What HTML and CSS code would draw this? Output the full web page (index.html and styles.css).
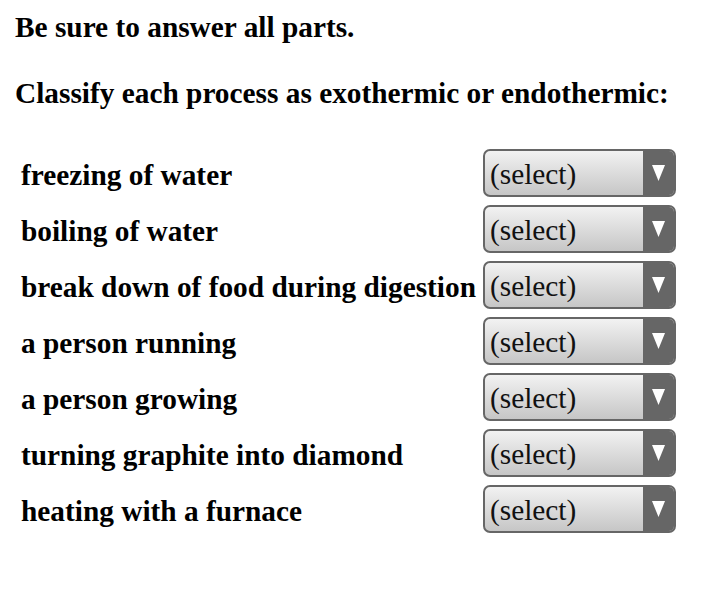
FILE: index.html
```html
<!DOCTYPE html>
<html>
<head>
<meta charset="utf-8">
<link rel="stylesheet" href="styles.css">
</head>
<body>
<div class="page">
  <p class="note">Be sure to answer all parts.</p>
  <p class="prompt">Classify each process as exothermic or endothermic:</p>
  <div class="rows">
    <div class="label">freezing of water</div>
    <div class="sel"><span class="val">(select)</span><span class="arrow"><svg width="13" height="16" viewBox="0 0 13 16"><polygon points="0,0 13,0 6.5,16" fill="#fff"/></svg></span></div>
    <div class="label">boiling of water</div>
    <div class="sel"><span class="val">(select)</span><span class="arrow"><svg width="13" height="16" viewBox="0 0 13 16"><polygon points="0,0 13,0 6.5,16" fill="#fff"/></svg></span></div>
    <div class="label">break down of food during digestion</div>
    <div class="sel"><span class="val">(select)</span><span class="arrow"><svg width="13" height="16" viewBox="0 0 13 16"><polygon points="0,0 13,0 6.5,16" fill="#fff"/></svg></span></div>
    <div class="label">a person running</div>
    <div class="sel"><span class="val">(select)</span><span class="arrow"><svg width="13" height="16" viewBox="0 0 13 16"><polygon points="0,0 13,0 6.5,16" fill="#fff"/></svg></span></div>
    <div class="label">a person growing</div>
    <div class="sel"><span class="val">(select)</span><span class="arrow"><svg width="13" height="16" viewBox="0 0 13 16"><polygon points="0,0 13,0 6.5,16" fill="#fff"/></svg></span></div>
    <div class="label">turning graphite into diamond</div>
    <div class="sel"><span class="val">(select)</span><span class="arrow"><svg width="13" height="16" viewBox="0 0 13 16"><polygon points="0,0 13,0 6.5,16" fill="#fff"/></svg></span></div>
    <div class="label">heating with a furnace</div>
    <div class="sel"><span class="val">(select)</span><span class="arrow"><svg width="13" height="16" viewBox="0 0 13 16"><polygon points="0,0 13,0 6.5,16" fill="#fff"/></svg></span></div>
  </div>
</div>
</body>
</html>
```
FILE: styles.css
```css
html, body {
  margin: 0;
  padding: 0;
  background: #fff;
}
.page {
  padding: 9px 0 0 15px;
  font-family: "Liberation Serif", "Times New Roman", serif;
  color: #000;
}
.note, .prompt {
  margin: 0;
  font-size: 29.33px;
  font-weight: bold;
  line-height: 36px;
}
.prompt {
  margin-top: 30px;
}
.rows {
  margin-top: 38px;
  display: grid;
  grid-template-columns: max-content 193px;
  column-gap: 7px;
  row-gap: 8px;
  padding-left: 6px;
}
.label {
  font-size: 29.33px;
  font-weight: bold;
  display: flex;
  align-items: center;
  padding-top: 4px;
}
.sel {
  height: 48px;
  box-sizing: border-box;
  border: 2px solid #666;
  border-radius: 7px;
  display: flex;
  overflow: hidden;
  background: linear-gradient(#f2f2f2, #c6c6c6);
}
.val {
  flex: 1;
  font-size: 29.33px;
  color: #111;
  padding-left: 5px;
  padding-top: 3px;
  display: flex;
  align-items: center;
}
.arrow {
  width: 31px;
  background: #666;
  display: flex;
  align-items: center;
  justify-content: center;
}
.arrow svg {
  display: block;
}
```
